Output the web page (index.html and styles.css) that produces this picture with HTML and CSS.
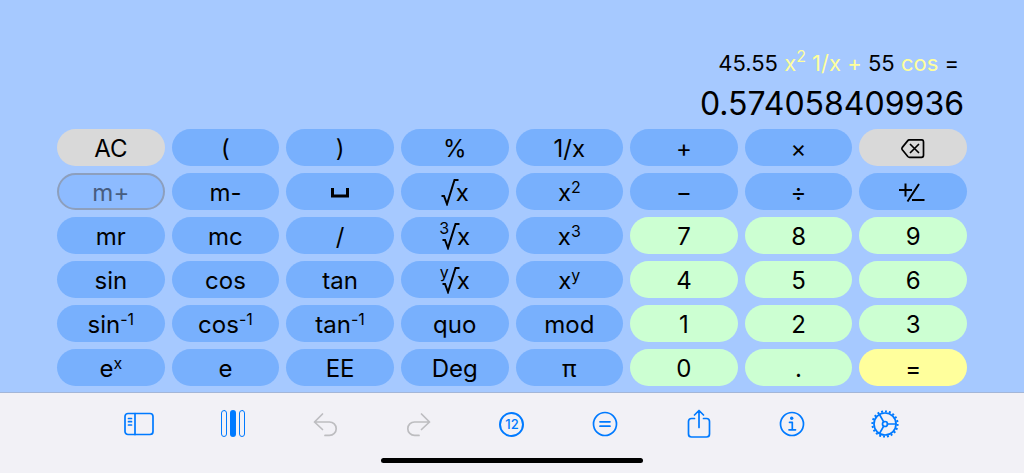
FILE: index.html
```html
<!DOCTYPE html>
<html lang="en">
<head>
    <meta charset="UTF-8">
    <meta name="viewport" content="width=device-width, initial-scale=1.0">
    <title>Calculator</title>
    <link rel="stylesheet" href="styles.css">
</head>
<body>
    <main class="calculator">
        <div class="display">
            <div class="expression">45.55 <span class="op">x<sup>2</sup> 1/x +</span> 55 <span class="op">cos</span> =</div>
            <div class="result">0.574058409936</div>
        </div>

        <div class="keypad">
            <button class="key clear">AC</button>
            <button class="key">(</button>
            <button class="key">)</button>
            <button class="key">%</button>
            <button class="key">1/x</button>
            <button class="key">+</button>
            <button class="key">×</button>
            <button class="key clear" aria-label="Delete">
                <svg width="24" height="20" viewBox="0 0 24 20"><path d="M8.500 .8H20.500Q22.500 .8 22.500 2.800V16.300Q22.500 18.300 20.500 18.300H8.500Q7.500 18.300 6.800 17.500L1.300 10.800Q.5 9.600 1.300 8.400L6.800 1.600Q7.500 .8 8.500 .8ZM9.500 5.500L17.500 13.500M17.500 5.500L9.500 13.500"/></svg>
            </button>

            <button class="key" disabled>m+</button>
            <button class="key">m-</button>
            <button class="key" aria-label="Space">
                <svg class="thick" width="18" height="20" viewBox="0 0 18 20"><path d="M1.500 5V13H16.500V5"/></svg>
            </button>
            <button class="key"><span class="root"><svg width="18" height="27" viewBox="0 0 18 27"><path d="M.5 17H3L6 25L13.500 1H17.500"/></svg>x</span></button>
            <button class="key">x<sup>2</sup></button>
            <button class="key">−</button>
            <button class="key">÷</button>
            <button class="key" aria-label="Change sign">
                <svg class="sign" width="28" height="20" viewBox="0 0 28 20"><path d="M0 7H13M6.500 .5V13.500M20 1L8.500 18.500M13 17H25.500"/></svg>
            </button>

            <button class="key">mr</button>
            <button class="key">mc</button>
            <button class="key">/</button>
            <button class="key"><span class="root"><sup>3</sup><svg width="18" height="27" viewBox="0 0 18 27"><path d="M.5 17H3L6 25L13.500 1H17.500"/></svg>x</span></button>
            <button class="key">x<sup>3</sup></button>
            <button class="key digit">7</button>
            <button class="key digit">8</button>
            <button class="key digit">9</button>

            <button class="key">sin</button>
            <button class="key">cos</button>
            <button class="key">tan</button>
            <button class="key"><span class="root"><sup>y</sup><svg width="18" height="27" viewBox="0 0 18 27"><path d="M.5 17H3L6 25L13.500 1H17.500"/></svg>x</span></button>
            <button class="key">x<sup>y</sup></button>
            <button class="key digit">4</button>
            <button class="key digit">5</button>
            <button class="key digit">6</button>

            <button class="key">sin<sup>-1</sup></button>
            <button class="key">cos<sup>-1</sup></button>
            <button class="key">tan<sup>-1</sup></button>
            <button class="key">quo</button>
            <button class="key">mod</button>
            <button class="key digit">1</button>
            <button class="key digit">2</button>
            <button class="key digit">3</button>

            <button class="key">e<sup>x</sup></button>
            <button class="key">e</button>
            <button class="key">EE</button>
            <button class="key">Deg</button>
            <button class="key">π</button>
            <button class="key digit">0</button>
            <button class="key digit">.</button>
            <button class="key equals">=</button>
        </div>
    </main>

    <footer class="toolbar">
        <div class="tools">
            <button class="tool" aria-label="Sidebar">
                <svg width="30" height="30" viewBox="0 0 30 30"><rect x="1" y="4.500" width="28" height="21" rx="3"/><path d="M11 4.500V25.500M4.500 9.500H7.500M4.500 12.700H7.500M4.500 16H7.500"/></svg>
            </button>
            <button class="tool" aria-label="Columns">
                <svg width="26" height="30" viewBox="0 0 26 30"><rect class="thin" x="2.500" y="1.500" width="5" height="26" rx="2.500"/><rect class="solid" x="11" y="1" width="6" height="27" rx="3"/><rect class="thin" x="20.500" y="1.500" width="5" height="26" rx="2.500"/></svg>
            </button>
            <button class="tool" aria-label="Undo" disabled>
                <svg width="26" height="30" viewBox="0 0 26 30"><path d="M10.500 5L2.500 13L10.500 20.500M2.500 13H17.500A6.700 6.700 0 0 1 17.500 26.400H13"/></svg>
            </button>
            <button class="tool" aria-label="Redo" disabled>
                <svg width="26" height="30" viewBox="0 0 26 30"><path d="M15.500 5L23.500 13L15.500 20.500M23.500 13H8.500A6.700 6.700 0 0 0 8.500 26.400H13"/></svg>
            </button>
            <button class="tool" aria-label="12 digits"><span class="digits">12</span></button>
            <button class="tool" aria-label="Equals">
                <svg width="26" height="26" viewBox="0 0 26 26"><circle cx="13" cy="13" r="11.500"/><path d="M8 10.800H18M8 15.200H18"/></svg>
            </button>
            <button class="tool" aria-label="Share">
                <svg width="24" height="30" viewBox="0 0 24 30"><path d="M7.500 9.500H4.500Q1.500 9.500 1.500 12.500V25Q1.500 28 4.500 28H19.500Q22.500 28 22.500 25V12.500Q22.500 9.500 19.500 9.500H16.500M12 18.500V2M7.500 6L12 1.500L16.500 6"/></svg>
            </button>
            <button class="tool" aria-label="Info">
                <svg width="26" height="26" viewBox="0 0 26 26"><circle cx="13" cy="13" r="11.500"/><circle class="solid" cx="12.700" cy="7.300" r="1.700"/><path d="M10.500 11.300H13.300V18.800M10 18.800H16.500"/></svg>
            </button>
            <button class="tool" aria-label="Settings">
                <svg width="28" height="28" viewBox="0 0 28 28"><circle cx="14" cy="14" r="11"/><circle class="teeth" cx="14" cy="14" r="12.600" pathLength="40"/><circle cx="14" cy="14" r="2.500"/><path d="M16.500 14H25M12.700 11.800L8.500 4.500M12.700 16.200L8.500 23.500"/></svg>
            </button>
        </div>
        <div class="home-bar"></div>
    </footer>
</body>
</html>
```
FILE: styles.css
```css
:root {
    --bg-color: #a6c9ff;
    --key-color: #78b0fd;
    --digit-color: #ccffd2;
    --accent-color: #007aff;
}

* {
    box-sizing: border-box;
}

body {
    display: flex;
    flex-direction: column;
    min-height: 100vh;
    margin: 0;
    font-family: Inter, "Liberation Sans", sans-serif;
    font-feature-settings: "calt" 0;
    background-color: var(--bg-color);
    color: #000;
}

button {
    padding: 0;
    border: none;
    font: inherit;
    color: inherit;
    cursor: pointer;
}

svg {
    display: block;
    fill: none;
    stroke: currentColor;
    stroke-width: 1.7;
    stroke-linecap: round;
    stroke-linejoin: round;
}

sup {
    font-size: 16px;
    line-height: 0;
    vertical-align: 9px;
}

.calculator {
    flex: 1;
    display: flex;
    flex-direction: column;
    justify-content: flex-end;
    padding: 0 57px 6px;
}

.display {
    padding-bottom: 4px;
    text-align: right;
}

.expression {
    padding-right: 8px;
    font-size: 22px;
    line-height: 40px;
}

.op {
    color: #ffff9c;
}

.result {
    padding-right: 3px;
    font-size: 32px;
    line-height: 42px;
}

.keypad {
    display: grid;
    grid-template-columns: repeat(8, 1fr);
    grid-auto-rows: 37px;
    gap: 7px;
}

.key {
    display: flex;
    align-items: center;
    justify-content: center;
    padding-top: 2px;
    border-radius: 19px;
    background-color: var(--key-color);
    font-size: 24px;
    line-height: 36px;
}

.key sup {
    align-self: flex-start;
    line-height: 24px;
}

.key:disabled {
    border: 2px solid #8d9fbd;
    background-color: #8dbbff;
    color: #475d80;
}

.clear {
    background-color: #d9d9d9;
}

.digit {
    background-color: var(--digit-color);
}

.equals {
    background-color: #ffff9c;
}

.root {
    display: flex;
    align-items: center;
}

.root svg {
    margin-right: -3px;
    stroke-linecap: butt;
    stroke-linejoin: miter;
    stroke-width: 2;
}

.root sup {
    margin-right: -7px;
    line-height: 18px;
}

.thick {
    stroke-width: 3;
    stroke-linecap: butt;
    stroke-linejoin: miter;
}

.sign {
    stroke-width: 2;
    stroke-linecap: butt;
}

.toolbar {
    padding: 15px 92px 10px;
    border-top: 1px solid #a3b6d8;
    background-color: #f2f1f6;
}

.tools {
    display: grid;
    grid-template-columns: repeat(9, 1fr);
    height: 32px;
    margin-bottom: 18px;
}

.tool {
    display: flex;
    align-items: center;
    justify-content: center;
    background: none;
    color: var(--accent-color);
}

.tool:disabled {
    color: #bdbdc0;
}

.thin {
    stroke-width: 1;
}

.solid {
    fill: currentColor;
    stroke: none;
}

.teeth {
    stroke-width: 2;
    stroke-dasharray: 1 1;
    stroke-linecap: butt;
}

.digits {
    width: 25px;
    height: 25px;
    border: 2px solid;
    border-radius: 50%;
    font-size: 13px;
    font-weight: 500;
    line-height: 21px;
}

.home-bar {
    width: 262px;
    max-width: 100%;
    height: 5px;
    margin: 0 auto;
    border-radius: 3px;
    background-color: #000;
}
```
